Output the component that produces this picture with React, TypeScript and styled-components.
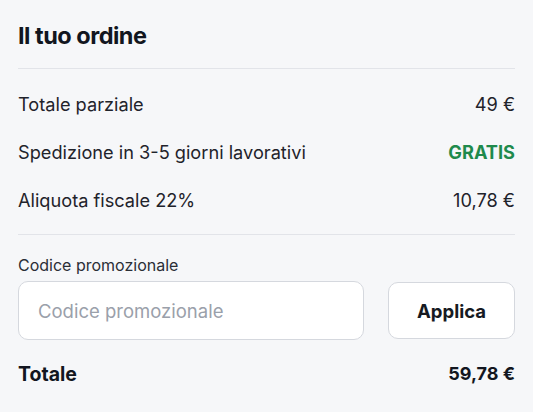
import React from "react";
import styled, { createGlobalStyle } from "styled-components";

const Global = createGlobalStyle`
  html, body { margin: 0; padding: 0; background: #f6f7f9; }
  body { font-family: Inter, "Noto Sans", sans-serif; color: #1c1f26; -webkit-font-smoothing: antialiased; }
`;

const Panel = styled.section`
  width: 533px;
  box-sizing: border-box;
  padding: 22px 18px 0 18px;
  background: #f6f7f9;
  display: flex;
  flex-direction: column;
`;

const Title = styled.h2`
  margin: 0;
  font-size: 23.5px;
  line-height: 28px;
  font-weight: 700;
  letter-spacing: -0.5px;
  color: #121620;
`;

const Divider = styled.hr<{ $top: number; $bottom: number }>`
  border: 0;
  height: 1px;
  background: #e2e4e9;
  margin: ${(p) => `${p.$top}px 0 ${p.$bottom}px`};
`;

const Rows = styled.div`
  display: flex;
  flex-direction: column;
  gap: 24px;
`;

const Row = styled.div`
  display: flex;
  justify-content: space-between;
  align-items: center;
  font-size: 18.2px;
  line-height: 24px;
  color: #1f232b;
`;

const Value = styled.span<{ $green?: boolean }>`
  font-weight: ${(p) => (p.$green ? 700 : 400)};
  color: ${(p) => (p.$green ? "#1f8a4c" : "#1f232b")};
`;

const Label = styled.label`
  font-size: 16px;
  line-height: 20px;
  color: #2a2e36;
  display: block;
  margin-bottom: 6px;
`;

const PromoRow = styled.div`
  display: flex;
  align-items: center;
  gap: 24px;
`;

const Input = styled.input`
  flex: 0 0 346px;
  height: 59px;
  box-sizing: border-box;
  border: 1px solid #d5d8de;
  border-radius: 10px;
  background: #fff;
  padding: 0 19px;
  font-family: inherit;
  font-size: 18.5px;
  color: #1f232b;
  outline: none;
  &::placeholder { color: #9aa0aa; }
`;

const Button = styled.button`
  flex: 0 0 127px;
  height: 57px;
  box-sizing: border-box;
  border: 1px solid #d5d8de;
  border-radius: 10px;
  background: #fff;
  font-family: inherit;
  font-size: 18.5px;
  font-weight: 700;
  color: #161a22;
  cursor: pointer;
`;

const TotalRow = styled(Row)`
  margin-top: 22px;
  font-weight: 700;
  font-size: 19.5px;
  color: #121620;
  & > span:last-child { font-size: 18px; }
`;

export default function App() {
  return (
    <>
      <Global />
      <Panel>
        <Title>Il tuo ordine</Title>
        <Divider $top={18} $bottom={23} />
        <Rows>
          <Row>
            <span>Totale parziale</span>
            <Value>49 €</Value>
          </Row>
          <Row>
            <span>Spedizione in 3-5 giorni lavorativi</span>
            <Value $green>GRATIS</Value>
          </Row>
          <Row>
            <span>Aliquota fiscale 22%</span>
            <Value>10,78 €</Value>
          </Row>
        </Rows>
        <Divider $top={22} $bottom={20} />
        <Label htmlFor="promo">Codice promozionale</Label>
        <PromoRow>
          <Input id="promo" placeholder="Codice promozionale" />
          <Button>Applica</Button>
        </PromoRow>
        <TotalRow>
          <span>Totale</span>
          <span>59,78 €</span>
        </TotalRow>
      </Panel>
    </>
  );
}
